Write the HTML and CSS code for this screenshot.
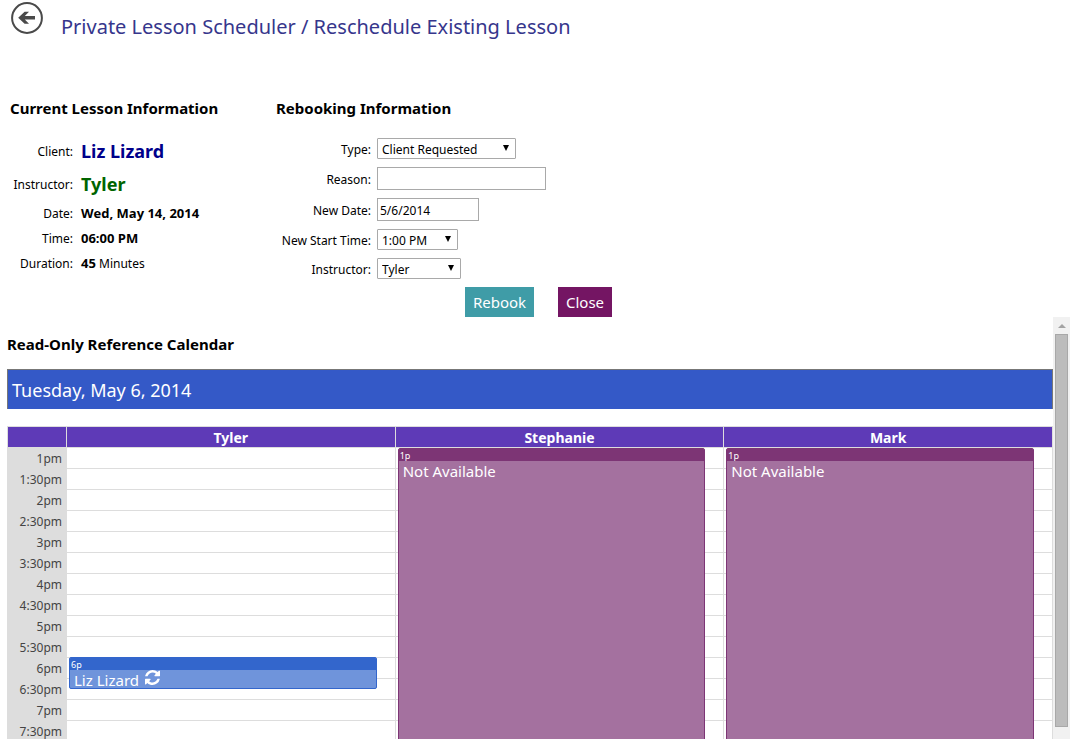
FILE: index.html
```html
<!DOCTYPE html>
<html lang="en">
<head>
  <meta charset="UTF-8">
  <meta name="viewport" content="width=device-width, initial-scale=1.0">
  <title>Private Lesson Scheduler</title>
  <link rel="stylesheet" href="styles.css">
</head>
<body>
  <!-- Header -->
  <header>
    <a href="#" class="back-link" aria-label="Back">
      <svg width="32" height="32" viewBox="0 0 32 32">
        <circle cx="16" cy="16" r="14.9" fill="none" stroke="#4a4a4a" stroke-width="2"/>
        <path d="M7.2 15.8 L13.6 9.8 H18 L13.8 14 H24 V17.6 H13.8 L18 21.8 H13.6 Z" fill="#4a4a4a"/>
      </svg>
    </a>
    <h1>Private Lesson Scheduler / Reschedule Existing Lesson</h1>
  </header>

  <!-- Lesson details and rebooking form -->
  <main class="details">
    <section class="current">
      <h2>Current Lesson Information</h2>
      <dl>
        <dt>Client:</dt><dd class="big client">Liz Lizard</dd>
        <dt>Instructor:</dt><dd class="big instructor">Tyler</dd>
        <dt>Date:</dt><dd><b>Wed, May 14, 2014</b></dd>
        <dt>Time:</dt><dd><b>06:00 PM</b></dd>
        <dt>Duration:</dt><dd><b>45</b> Minutes</dd>
      </dl>
    </section>

    <section class="rebooking">
      <h2>Rebooking Information</h2>
      <form>
        <label for="type">Type:</label>
        <span class="select type">
          <select id="type"><option>Client Requested</option></select>
        </span>
        <label for="reason">Reason:</label>
        <input type="text" id="reason">
        <label for="new-date">New Date:</label>
        <input type="text" id="new-date" class="date" value="5/6/2014">
        <label for="start-time">New Start Time:</label>
        <span class="select time">
          <select id="start-time"><option>1:00 PM</option></select>
        </span>
        <label for="instructor">Instructor:</label>
        <span class="select teacher">
          <select id="instructor"><option>Tyler</option></select>
        </span>
        <div class="buttons">
          <button type="button" class="rebook">Rebook</button>
          <button type="button" class="close">Close</button>
        </div>
      </form>
    </section>
  </main>

  <!-- Calendar -->
  <div class="calendar-pane">
    <section class="calendar">
      <h2>Read-Only Reference Calendar</h2>
      <div class="day">Tuesday, May 6, 2014</div>
      <table>
        <thead>
          <tr><th class="hour"></th><th>Tyler</th><th>Stephanie</th><th>Mark</th></tr>
        </thead>
        <tbody>
          <tr>
            <td class="hour">1pm</td>
            <td></td>
            <td>
              <div class="event unavailable"><div class="event-time">1p</div><div class="event-title">Not Available</div></div>
            </td>
            <td>
              <div class="event unavailable"><div class="event-time">1p</div><div class="event-title">Not Available</div></div>
            </td>
          </tr>
          <tr><td class="hour">1:30pm</td><td></td><td></td><td></td></tr>
          <tr><td class="hour">2pm</td><td></td><td></td><td></td></tr>
          <tr><td class="hour">2:30pm</td><td></td><td></td><td></td></tr>
          <tr><td class="hour">3pm</td><td></td><td></td><td></td></tr>
          <tr><td class="hour">3:30pm</td><td></td><td></td><td></td></tr>
          <tr><td class="hour">4pm</td><td></td><td></td><td></td></tr>
          <tr><td class="hour">4:30pm</td><td></td><td></td><td></td></tr>
          <tr><td class="hour">5pm</td><td></td><td></td><td></td></tr>
          <tr><td class="hour">5:30pm</td><td></td><td></td><td></td></tr>
          <tr>
            <td class="hour">6pm</td>
            <td>
              <div class="event lesson">
                <div class="event-time">6p</div>
                <div class="event-title">Liz Lizard
                  <svg width="15" height="15" viewBox="0 0 1536 1536" fill="#fff"><path d="M1511 928q0 5-1 7-64 268-268 434.500t-478 166.500q-146 0-282.500-55t-243.500-157l-129 129q-19 19-45 19t-45-19-19-45v-448q0-26 19-45t45-19h448q26 0 45 19t19 45-19 45l-137 137q71 66 161 102t187 36q134 0 250-65t186-179q11-17 53-117 8-23 30-23h192q13 0 22.500 9.500t9.500 22.500zM1536 128v448q0 26-19 45t-45 19h-448q-26 0-45-19t-19-45 19-45l138-138q-148-137-349-137-134 0-250 65t-186 179q-11 17-53 117-8 23-30 23h-199q-13 0-22.500-9.500t-9.500-22.500v-7q65-268 270-434.500t480-166.500q146 0 284 55.500t245 156.500l130-129q19-19 45-19t45 19 19 45z"/></svg>
                </div>
              </div>
            </td>
            <td></td>
            <td></td>
          </tr>
          <tr><td class="hour">6:30pm</td><td></td><td></td><td></td></tr>
          <tr><td class="hour">7pm</td><td></td><td></td><td></td></tr>
          <tr><td class="hour">7:30pm</td><td></td><td></td><td></td></tr>
        </tbody>
      </table>
    </section>
    <div class="scrollbar">
      <div class="scroll-up"></div>
      <div class="scroll-thumb"></div>
    </div>
  </div>
</body>
</html>
```
FILE: styles.css
```css
/* General Styles */
* {
  box-sizing: border-box;
}

body {
  margin: 0;
  height: 100vh;
  overflow: hidden;
  display: flex;
  flex-direction: column;
  font-family: "Noto Sans", "Open Sans", sans-serif;
  font-size: 12px;
  color: #000;
  background: #fff;
}

h2 {
  margin: 0;
  font-size: 15px;
  line-height: 20px;
  font-weight: 700;
}

b {
  font-size: 13px;
  font-family: "Open Sans", sans-serif;
}

/* Header */
header {
  display: flex;
  padding: 2px 11px 0;
  gap: 18px;
}

.back-link {
  height: 32px;
}

.back-link svg {
  display: block;
}

h1 {
  margin: 10px 0 0;
  font-size: 20px;
  line-height: 30px;
  font-weight: 400;
  color: #36368c;
}

/* Lesson details */
.details {
  display: flex;
  margin-top: 56px;
  padding-left: 10px;
}

.current {
  width: 266px;
}

dl {
  display: grid;
  grid-template-columns: 63px auto;
  column-gap: 8px;
  align-items: center;
  margin: 17px 0 0;
  line-height: 25px;
}

dt {
  text-align: right;
}

dd {
  margin: 0;
}

.big {
  font-size: 18px;
  line-height: 33px;
  font-weight: bold;
}

.client {
  color: #00008b;
}

.instructor {
  color: #006400;
}

/* Rebooking form */
form {
  display: grid;
  grid-template-columns: 95px auto;
  gap: 8px 6px;
  align-items: center;
  justify-items: start;
  margin-top: 20px;
}

label {
  justify-self: end;
  padding-top: 2px;
}

input,
select {
  font: inherit;
  color: #000;
  background: #fff;
  border: 1px solid #a9a9a9;
}

input {
  width: 169px;
  height: 23px;
  padding: 2px 2px 0;
}

.date {
  width: 102px;
}

.select {
  position: relative;
  height: 21px;
}

.select::after {
  content: "";
  position: absolute;
  right: 7px;
  top: 7px;
  border: 3px solid transparent;
  border-top: 6px solid #000;
  border-bottom: 0;
  pointer-events: none;
}

select {
  display: block;
  appearance: none;
  width: 100%;
  height: 21px;
  padding: 2px 4px 0;
  border-radius: 1px;
}

.type {
  width: 139px;
}

.time {
  width: 81px;
}

.teacher {
  width: 84px;
}

.buttons {
  grid-column: 2;
  display: flex;
  gap: 24px;
  margin-left: 88px;
}

button {
  height: 30px;
  padding: 0;
  border: none;
  font: inherit;
  font-size: 15px;
  color: #fff;
  cursor: pointer;
}

.rebook {
  width: 69px;
  background: #3f9ca7;
}

.close {
  width: 54px;
  background: #741563;
}

/* Calendar */
.calendar-pane {
  flex: 1;
  min-height: 0;
  display: flex;
  overflow: hidden;
  padding: 0 2px 0 7px;
}

.calendar {
  flex: 1;
  padding-top: 17px;
}

.day {
  height: 40px;
  margin: 15px 0 17px;
  padding-left: 4px;
  border: 1px solid #777;
  border-bottom: none;
  background: #3459c7;
  color: #fff;
  font-size: 18px;
  line-height: 41px;
}

table {
  width: 100%;
  table-layout: fixed;
  border-spacing: 0;
  border-top: 1px solid #ddd;
  border-left: 1px solid #ddd;
}

th,
td {
  height: 21px;
  padding: 0;
  border-right: 1px solid #ddd;
  border-bottom: 1px solid #ddd;
}

th {
  padding-top: 1px;
  background: #5e3ab7;
  color: #fff;
  font-size: 14px;
  line-height: 19px;
}

td {
  position: relative;
}

.hour {
  width: 59px;
}

td.hour {
  padding: 1px 4px 0 0;
  background: #ddd;
  color: #444;
  font-size: 12px;
  line-height: 19px;
  text-align: right;
}

/* Events lie over the half-hour rows */
.event {
  position: absolute;
  z-index: 1;
  top: 0;
  left: 2px;
  right: 18px;
  border: 1px solid;
  border-radius: 2px;
  color: #fff;
  overflow: hidden;
}

.event-time {
  height: 12px;
  padding-left: 1px;
  font-size: 9px;
  line-height: 14px;
}

.event-title {
  display: flex;
  gap: 6px;
  padding-left: 4px;
  font-size: 15px;
  line-height: 21px;
}

.unavailable {
  height: 420px;
  border-color: #7d3575;
  background: #a4719f;
}

.unavailable .event-time {
  background: #7d3575;
}

.lesson {
  top: -1px;
  height: 32px;
  border-color: #3366cc;
  background: #6f94db;
}

.lesson .event-time {
  background: #3366cc;
}

/* Scrollbar */
.scrollbar {
  width: 17px;
  padding: 0 2px;
  background: #f1f1f1;
}

.scroll-up {
  height: 17px;
  padding: 7px 3px;
}

.scroll-up::before {
  content: "";
  display: block;
  width: 0;
  border: 4px solid transparent;
  border-bottom-color: #a3a3a3;
  border-top: 0;
}

.scroll-thumb {
  height: calc(100% - 29px);
  border: 1px solid #a8a8a8;
  background: #bcbcbc;
}
```
